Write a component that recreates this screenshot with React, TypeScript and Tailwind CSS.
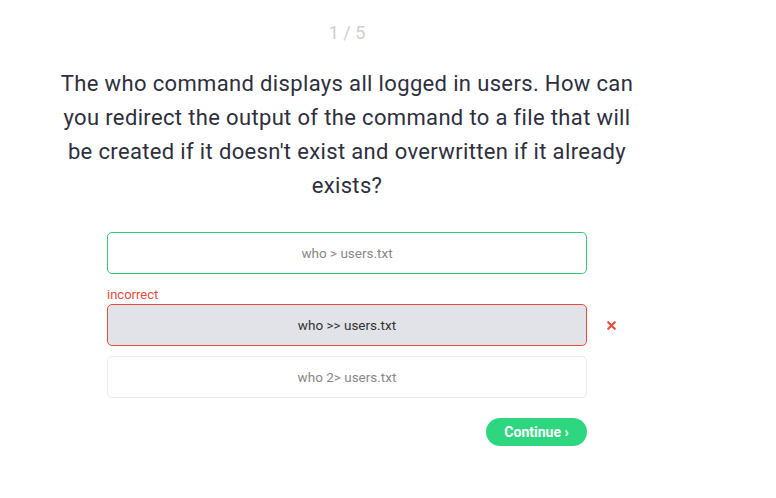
import { X } from 'lucide-react'

const options = [
  { text: 'who > users.txt', state: 'correct' },
  { text: 'who >> users.txt', state: 'wrong' },
  { text: 'who 2> users.txt', state: 'idle' },
]

export default function App() {
  return (
    <div className="w-[776px] h-[498px] bg-white font-['Roboto',sans-serif]">
      <div className="w-[694px] flex flex-col items-center pt-[22px]">
        {/* counter */}
        <div className="text-[18px] leading-[22px] text-[#cfcfcf]">1 / 5</div>

        {/* question */}
        <p className="mt-[23px] w-[640px] text-center text-[22px] leading-[34px] tracking-[0.35px] text-[#2e2f3e]">
          The who command displays all logged in users. How can
          <br />
          you redirect the output of the command to a file that will
          <br />
          be created if it doesn't exist and overwritten if it already
          <br />
          exists?
        </p>

        {/* answers */}
        <div className="mt-[29px] w-[480px] flex flex-col">
          {options.map((o) => (
            <div key={o.text} className="flex flex-col mb-[10px]">
              {o.state === 'wrong' && (
                <div className="text-[13px] leading-[15px] text-[#e74c3c] mt-[3px] mb-[2px]">incorrect</div>
              )}
              <div className="relative">
                <div
                  className={
                    o.state === 'correct'
                      ? 'h-[42px] rounded-[5px] border border-[#2ecc71] bg-white flex items-center justify-center text-[13.5px] text-[#888888]'
                      : o.state === 'wrong'
                        ? 'h-[42px] rounded-[5px] border border-[#e74c3c] bg-[#e2e3e8] flex items-center justify-center text-[13.5px] text-[#333333]'
                        : 'h-[42px] rounded-[5px] border border-[#ebebeb] bg-white flex items-center justify-center text-[13.5px] text-[#888888]'
                  }
                >
                  {o.text}
                </div>
                {o.state === 'wrong' && (
                  <X size={13} strokeWidth={4} className="absolute left-[498px] top-[15px] text-[#e74c3c]" />
                )}
              </div>
            </div>
          ))}
        </div>

        {/* continue */}
        <div className="w-[480px] flex justify-end mt-[10px]">
          <button className="w-[101px] h-[28px] rounded-full bg-[#2fd680] text-white text-[14px] font-bold flex items-center justify-center">
            Continue ›
          </button>
        </div>
      </div>
    </div>
  )
}
